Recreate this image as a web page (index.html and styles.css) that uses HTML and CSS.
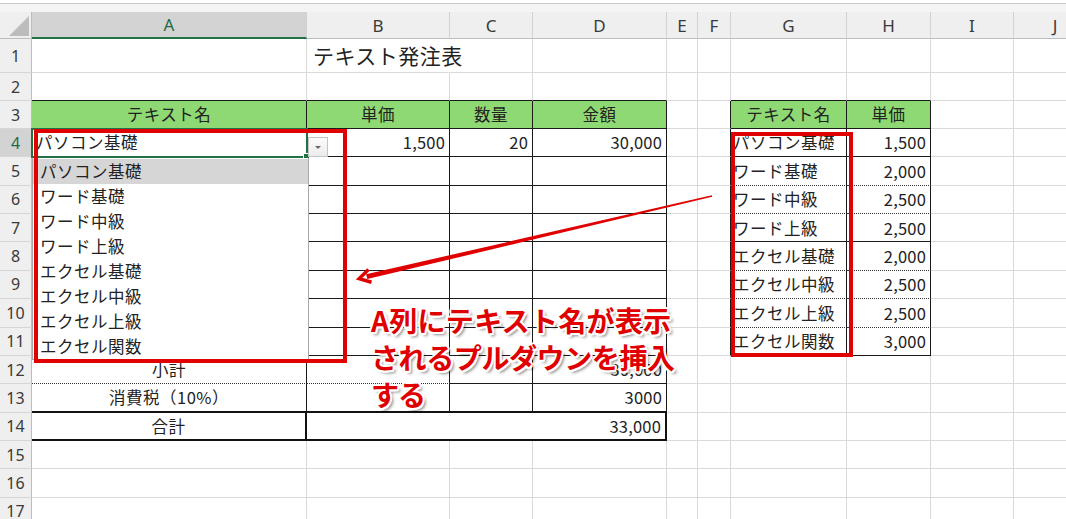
FILE: index.html
```html
<!DOCTYPE html>
<html lang="ja">
<head>
<meta charset="utf-8">
<title>テキスト発注表</title>
<link rel="stylesheet" href="styles.css">
</head>
<body>
<div class="app">
  <div class="topbar"></div>
  <div class="sheet">
    <div class="corner"></div>
    <div class="colh sel">A</div><div class="colh">B</div><div class="colh">C</div><div class="colh">D</div><div class="colh">E</div><div class="colh">F</div><div class="colh">G</div><div class="colh">H</div><div class="colh">I</div><div class="colh">J</div>

    <div class="rowh">1</div>
    <div class="c"></div><div class="c title">テキスト発注表</div><div class="c"></div><div class="c"></div><div class="c"></div><div class="c"></div><div class="c"></div><div class="c"></div><div class="c"></div><div class="c"></div>

    <div class="rowh">2</div>
    <div class="c b"></div><div class="c b"></div><div class="c b"></div><div class="c b"></div><div class="c"></div><div class="c"></div><div class="c b"></div><div class="c b"></div><div class="c"></div><div class="c"></div>

    <div class="rowh">3</div>
    <div class="c g r b ce">テキスト名</div><div class="c g r b ce">単価</div><div class="c g r b ce">数量</div><div class="c g r b ce">金額</div><div class="c"></div><div class="c r"></div><div class="c g r b ce">テキスト名</div><div class="c g r b ce">単価</div><div class="c"></div><div class="c"></div>

    <div class="rowh sel">4</div>
    <div class="c r b active">パソコン基礎</div><div class="c r b nu">1,500</div><div class="c r b nu">20</div><div class="c r b nu">30,000</div><div class="c"></div><div class="c r"></div><div class="c r b tight">パソコン基礎</div><div class="c r b nu">1,500</div><div class="c"></div><div class="c"></div>

    <div class="rowh">5</div>
    <div class="c r b"></div><div class="c r b"></div><div class="c r b"></div><div class="c r b"></div><div class="c"></div><div class="c r"></div><div class="c r d tight">ワード基礎</div><div class="c r d nu">2,000</div><div class="c"></div><div class="c"></div>

    <div class="rowh">6</div>
    <div class="c r b"></div><div class="c r b"></div><div class="c r b"></div><div class="c r b"></div><div class="c"></div><div class="c r"></div><div class="c r d tight">ワード中級</div><div class="c r d nu">2,500</div><div class="c"></div><div class="c"></div>

    <div class="rowh">7</div>
    <div class="c r b"></div><div class="c r b"></div><div class="c r b"></div><div class="c r b"></div><div class="c"></div><div class="c r"></div><div class="c r b tight">ワード上級</div><div class="c r b nu">2,500</div><div class="c"></div><div class="c"></div>

    <div class="rowh">8</div>
    <div class="c r b"></div><div class="c r b"></div><div class="c r b"></div><div class="c r b"></div><div class="c"></div><div class="c r"></div><div class="c r d tight">エクセル基礎</div><div class="c r d nu">2,000</div><div class="c"></div><div class="c"></div>

    <div class="rowh">9</div>
    <div class="c r b"></div><div class="c r b"></div><div class="c r b"></div><div class="c r b"></div><div class="c"></div><div class="c r"></div><div class="c r d tight">エクセル中級</div><div class="c r d nu">2,500</div><div class="c"></div><div class="c"></div>

    <div class="rowh">10</div>
    <div class="c r b"></div><div class="c r b"></div><div class="c r b"></div><div class="c r b"></div><div class="c"></div><div class="c r"></div><div class="c r d tight">エクセル上級</div><div class="c r d nu">2,500</div><div class="c"></div><div class="c"></div>

    <div class="rowh">11</div>
    <div class="c r b"></div><div class="c r b"></div><div class="c r b"></div><div class="c r b"></div><div class="c"></div><div class="c r"></div><div class="c r b tight">エクセル関数</div><div class="c r b nu">3,000</div><div class="c"></div><div class="c"></div>

    <div class="rowh">12</div>
    <div class="c r d ce">小計</div><div class="c r d"></div><div class="c r b"></div><div class="c r b nu">30,000</div><div class="c"></div><div class="c"></div><div class="c"></div><div class="c"></div><div class="c"></div><div class="c"></div>

    <div class="rowh">13</div>
    <div class="c r b2 ce">消費税（10%）</div><div class="c r b2"></div><div class="c r b2"></div><div class="c r b2 nu">3000</div><div class="c"></div><div class="c"></div><div class="c"></div><div class="c"></div><div class="c"></div><div class="c"></div>

    <div class="rowh">14</div>
    <div class="c r2 b2 ce">合計</div><div class="c r2 b2 nu span3">33,000</div><div class="c"></div><div class="c"></div><div class="c"></div><div class="c"></div><div class="c"></div><div class="c"></div>

    <div class="rowh">15</div>
    <div class="c"></div><div class="c"></div><div class="c"></div><div class="c"></div><div class="c"></div><div class="c"></div><div class="c"></div><div class="c"></div><div class="c"></div><div class="c"></div>

    <div class="rowh">16</div>
    <div class="c"></div><div class="c"></div><div class="c"></div><div class="c"></div><div class="c"></div><div class="c"></div><div class="c"></div><div class="c"></div><div class="c"></div><div class="c"></div>

    <div class="rowh">17</div>
    <div class="c"></div><div class="c"></div><div class="c"></div><div class="c"></div><div class="c"></div><div class="c"></div><div class="c"></div><div class="c"></div><div class="c"></div><div class="c"></div>
  </div>

  <div class="ddbtn"><span class="tri"></span></div>
  <div class="dropdown">
    <div class="dd-item hl">パソコン基礎</div>
    <div class="dd-item">ワード基礎</div>
    <div class="dd-item">ワード中級</div>
    <div class="dd-item">ワード上級</div>
    <div class="dd-item">エクセル基礎</div>
    <div class="dd-item">エクセル中級</div>
    <div class="dd-item">エクセル上級</div>
    <div class="dd-item">エクセル関数</div>
  </div>

  <div class="mark mark-list"></div>
  <div class="mark mark-master"></div>

  <svg class="arrow" width="1066" height="519" viewBox="0 0 1066 519">
    <polygon points="711.8,195.3 712.2,196.7 367.3,279.1 366.1,274.3" fill="#e00000"/>
    <polyline points="368.5,269.5 359.2,278.6 371.5,282.2" fill="none" stroke="#e00000" stroke-width="3.5" stroke-linejoin="miter"/>
  </svg>

  <div class="note">
    <div class="note-l1">A列にテキスト名が表示</div>
    <div class="note-l2">されるプルダウンを挿入</div>
    <div class="note-l3">する</div>
  </div>
</div>
</body>
</html>
```

FILE: styles.css
```css
html, body {
  margin: 0;
  padding: 0;
  background: #ffffff;
}

body {
  font-family: "Noto Sans CJK JP", "Noto Sans", sans-serif;
  color: #222222;
}

.app {
  position: relative;
  width: 1066px;
  height: 519px;
  overflow: hidden;
}

.topbar {
  height: 12px;
  background: linear-gradient(#ffffff 0 3px, #c9c9c9 3px 4px, #f4f4f4 4px);
}

.sheet {
  display: grid;
  grid-template-columns: 32px 275px 143px 83px 134px 31px 33px 116px 84px 83px 83px;
  grid-template-rows: 27px 34px 28px 28px repeat(14, 28.36px);
}

.corner {
  position: relative;
  background: #efefef;
  border-right: 1px solid #bdbdbd;
  border-bottom: 1px solid #bdbdbd;
  box-sizing: border-box;
}

.corner::after {
  content: "";
  position: absolute;
  left: 9px;
  top: 4px;
  width: 20px;
  height: 20px;
  background: #bcbcbc;
  clip-path: polygon(100% 0, 100% 100%, 0 100%);
}

.colh {
  display: flex;
  align-items: center;
  justify-content: center;
  background: #efefef;
  border-right: 1px solid #d2d2d2;
  border-bottom: 1px solid #bdbdbd;
  box-sizing: border-box;
  font-family: "Noto Sans", "Noto Sans CJK JP", sans-serif;
  font-size: 17px;
  color: #3a3a3a;
}

.colh.sel {
  background: #d3d3d3;
  border-bottom: 2px solid #217346;
  color: #1f6b3f;
}

.rowh {
  display: flex;
  align-items: center;
  justify-content: center;
  background: #efefef;
  border-right: 1px solid #bdbdbd;
  border-bottom: 1px solid #d6d6d6;
  box-sizing: border-box;
  font-family: "Noto Sans", "Noto Sans CJK JP", sans-serif;
  font-size: 16px;
  color: #3a3a3a;
}

.rowh.sel {
  background: #d3d3d3;
  color: #1f6b3f;
}

.c {
  display: flex;
  align-items: center;
  box-sizing: border-box;
  border-right: 1px solid #dadada;
  border-bottom: 1px solid #dadada;
  padding: 0 4px;
  font-size: 16.5px;
  line-height: 1;
  letter-spacing: 0.5px;
  white-space: nowrap;
  color: #222222;
  min-width: 0;
}

.c.title {
  font-size: 21px;
  padding-left: 6px;
  border-right-color: transparent;
  overflow: visible;
}

.c.r { border-right: 1px solid #1a1a1a; }
.c.r2 { border-right: 2px solid #111111; }
.c.b { border-bottom: 1px solid #1a1a1a; }
.c.d { border-bottom: 1px dotted #333333; }
.c.b2 { border-bottom: 2px solid #111111; }

.c.g { background: #8ed973; }
.c.ce { justify-content: center; }
.c.nu { justify-content: flex-end; padding-right: 4px; letter-spacing: 0.2px; }
.c.tight { padding-left: 2px; }
.c.span3 { grid-column: span 3; }

.c.active {
  position: relative;
  outline: 2px solid #217346;
  outline-offset: -1px;
}

.c.active::after {
  content: "";
  position: absolute;
  right: -4px;
  bottom: -4px;
  width: 5px;
  height: 5px;
  background: #217346;
  border: 1px solid #ffffff;
}

.ddbtn {
  position: absolute;
  left: 308px;
  top: 137px;
  width: 20px;
  height: 20px;
  box-sizing: border-box;
  border: 1px solid #c4c4c4;
  background: linear-gradient(#fbfbfb, #ececec);
  display: flex;
  align-items: center;
  justify-content: center;
}

.ddbtn .tri {
  width: 0;
  height: 0;
  border-left: 3px solid transparent;
  border-right: 3px solid transparent;
  border-top: 3px solid #666666;
}

.dropdown {
  position: absolute;
  left: 32px;
  top: 158px;
  width: 277px;
  height: 202px;
  box-sizing: border-box;
  background: #ffffff;
  border: 1px solid #a8a8a8;
  border-top: none;
  padding-top: 1px;
}

.dd-item {
  height: 25px;
  display: flex;
  align-items: center;
  padding-left: 7px;
  font-size: 16.5px;
  line-height: 1;
  letter-spacing: 0.5px;
  color: #222222;
  white-space: nowrap;
}

.dd-item.hl {
  background: #d6d6d6;
}

.mark {
  position: absolute;
  box-sizing: border-box;
  border: 4px solid #e00000;
}

.mark-list {
  left: 34px;
  top: 129px;
  width: 313px;
  height: 234px;
}

.mark-master {
  left: 731px;
  top: 132px;
  width: 122px;
  height: 225px;
}

.arrow {
  position: absolute;
  left: 0;
  top: 0;
  pointer-events: none;
}

.note {
  position: absolute;
  left: 371px;
  top: 302px;
  font-family: "Noto Sans CJK JP", "Noto Sans", sans-serif;
  font-weight: 700;
  font-size: 28px;
  line-height: 37px;
  color: #e00000;
  white-space: nowrap;
  text-shadow:
    2px 0 0 #ffffff, -2px 0 0 #ffffff, 0 2px 0 #ffffff, 0 -2px 0 #ffffff,
    1.5px 1.5px 0 #ffffff, -1.5px 1.5px 0 #ffffff, 1.5px -1.5px 0 #ffffff, -1.5px -1.5px 0 #ffffff,
    3px 3px 3px rgba(0, 0, 0, 0.45);
}

.note-l1 { letter-spacing: 0.3px; }
.note-l2 { letter-spacing: -0.4px; }
.note-l3 { letter-spacing: -1px; }
```
